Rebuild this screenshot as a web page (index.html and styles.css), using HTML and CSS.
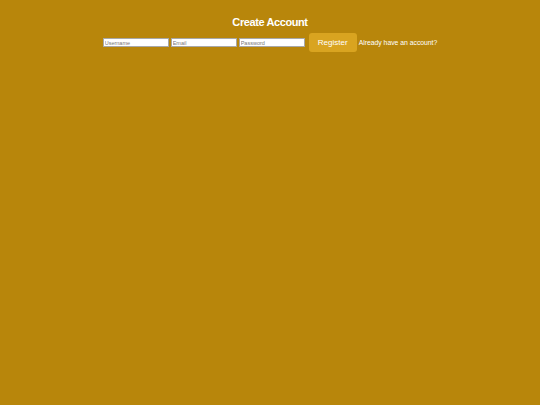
FILE: index.html
```html
<!DOCTYPE html>
<html lang="en">
<head>
  <meta charset="UTF-8" />
  <meta name="viewport" content="width=device-width, initial-scale=1" />
  <title>Create Account</title>
  <link rel="stylesheet" href="styles.css">
</head>
<body>
  <div class="signup">
    <h2 class="signup-title">Create Account</h2>
    <form class="signup-form">
      <input type="text" class="field" placeholder="Username">
      <input type="email" class="field" placeholder="Email">
      <input type="password" class="field" placeholder="Password">
      <button type="button" class="register-btn">Register</button>
      <span class="login-link">Already have an account?</span>
    </form>
  </div>
</body>
</html>
```

FILE: styles.css
```css
html, body {
  margin: 0;
  padding: 0;
  min-height: 100%;
}
body {
  background: #b8860b;
  font-family: "Liberation Sans", Arial, sans-serif;
  color: #fff;
  min-height: 100vh;
}
.signup {
  display: flex;
  flex-direction: column;
  align-items: center;
  padding-top: 15px;
}
.signup-title {
  margin: 0 0 4px 0;
  font-size: 11px;
  font-weight: 700;
  letter-spacing: -0.4px;
  line-height: 14px;
}
.signup-form {
  display: flex;
  align-items: center;
  gap: 2px;
}
.field {
  width: 66px;
  height: 9px;
  box-sizing: border-box;
  padding: 0 1px;
  border: 1px solid #a8a8a8;
  background: #fff;
  font-family: inherit;
  font-size: 5.5px;
  color: #333;
  outline: none;
}
.field::placeholder {
  color: #777;
}
.register-btn {
  width: 48px;
  height: 19px;
  margin-left: 2px;
  padding: 0;
  border: none;
  border-radius: 3px;
  background: #d9a420;
  color: #fff;
  font-family: inherit;
  font-size: 8px;
  cursor: pointer;
}
.login-link {
  font-size: 6.8px;
}
```
